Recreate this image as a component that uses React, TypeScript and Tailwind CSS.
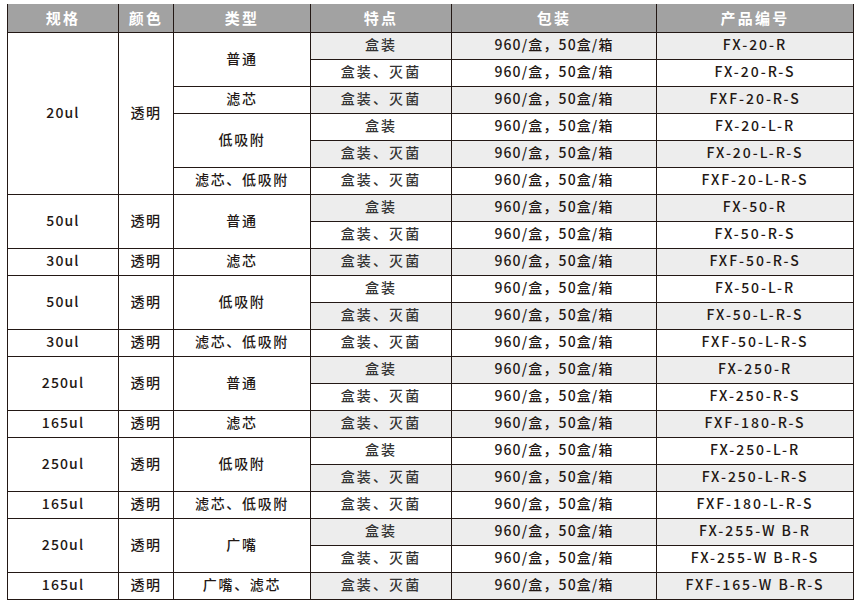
const rows: { size?: [string, number]; color?: [string, number]; type?: [string, number]; feature: string; code: string }[] = [
  { size: ["20ul", 6], color: ["透明", 6], type: ["普通", 2], feature: "盒装", code: "FX-20-R" },
  { feature: "盒装、灭菌", code: "FX-20-R-S" },
  { type: ["滤芯", 1], feature: "盒装、灭菌", code: "FXF-20-R-S" },
  { type: ["低吸附", 2], feature: "盒装", code: "FX-20-L-R" },
  { feature: "盒装、灭菌", code: "FX-20-L-R-S" },
  { type: ["滤芯、低吸附", 1], feature: "盒装、灭菌", code: "FXF-20-L-R-S" },
  { size: ["50ul", 2], color: ["透明", 2], type: ["普通", 2], feature: "盒装", code: "FX-50-R" },
  { feature: "盒装、灭菌", code: "FX-50-R-S" },
  { size: ["30ul", 1], color: ["透明", 1], type: ["滤芯", 1], feature: "盒装、灭菌", code: "FXF-50-R-S" },
  { size: ["50ul", 2], color: ["透明", 2], type: ["低吸附", 2], feature: "盒装", code: "FX-50-L-R" },
  { feature: "盒装、灭菌", code: "FX-50-L-R-S" },
  { size: ["30ul", 1], color: ["透明", 1], type: ["滤芯、低吸附", 1], feature: "盒装、灭菌", code: "FXF-50-L-R-S" },
  { size: ["250ul", 2], color: ["透明", 2], type: ["普通", 2], feature: "盒装", code: "FX-250-R" },
  { feature: "盒装、灭菌", code: "FX-250-R-S" },
  { size: ["165ul", 1], color: ["透明", 1], type: ["滤芯", 1], feature: "盒装、灭菌", code: "FXF-180-R-S" },
  { size: ["250ul", 2], color: ["透明", 2], type: ["低吸附", 2], feature: "盒装", code: "FX-250-L-R" },
  { feature: "盒装、灭菌", code: "FX-250-L-R-S" },
  { size: ["165ul", 1], color: ["透明", 1], type: ["滤芯、低吸附", 1], feature: "盒装、灭菌", code: "FXF-180-L-R-S" },
  { size: ["250ul", 2], color: ["透明", 2], type: ["广嘴", 2], feature: "盒装", code: "FX-255-W B-R" },
  { feature: "盒装、灭菌", code: "FX-255-W B-R-S" },
  { size: ["165ul", 1], color: ["透明", 1], type: ["广嘴、滤芯", 1], feature: "盒装、灭菌", code: "FXF-165-W B-R-S" },
];

const cell = "border border-[#231815] text-center align-middle p-0 pb-[2px]";

export default function App() {
  return (
    <div className="bg-white w-[862px] h-[601px] pt-[4px] pl-[7px]" style={{ fontFamily: '"Noto Sans CJK SC", "Noto Sans", sans-serif' }}>
      <table className="table-fixed border-collapse w-[846px] text-[14px] font-medium text-[#231815]">
        <colgroup>
          <col className="w-[111px]" />
          <col className="w-[55px]" />
          <col className="w-[137px]" />
          <col className="w-[141px]" />
          <col className="w-[205px]" />
          <col className="w-[197px]" />
        </colgroup>
        <thead>
          <tr className="h-[28px] bg-[#a2a2a2] text-white text-[15px] tracking-[0.15em]">
            {["规格", "颜色", "类型", "特点", "包装", "产品编号"].map((h) => (
              <th key={h} className="border-x border-b border-[#231815] text-center font-bold p-0">{h}</th>
            ))}
          </tr>
        </thead>
        <tbody>
          {rows.map((r, i) => {
            const shade = i % 2 === 0 ? "bg-[#ededed]" : "bg-white";
            return (
              <tr key={i} className="h-[27px]">
                {r.size && (
                  <td rowSpan={r.size[1]} className={`${cell} tracking-[0.08em]`}>{r.size[0]}</td>
                )}
                {r.color && (
                  <td rowSpan={r.color[1]} className={`${cell} tracking-[0.1em]`}>{r.color[0]}</td>
                )}
                {r.type && (
                  <td rowSpan={r.type[1]} className={`${cell} tracking-[0.12em]`}>{r.type[0]}</td>
                )}
                <td className={`${cell} ${shade} text-[#333] tracking-[0.15em]`}>{r.feature}</td>
                <td className={`${cell} ${shade} tracking-[0.08em]`}>960/盒，50盒/箱</td>
                <td className={`${cell} ${shade} tracking-[0.14em] whitespace-pre`}>{r.code}</td>
              </tr>
            );
          })}
        </tbody>
      </table>
    </div>
  );
}
